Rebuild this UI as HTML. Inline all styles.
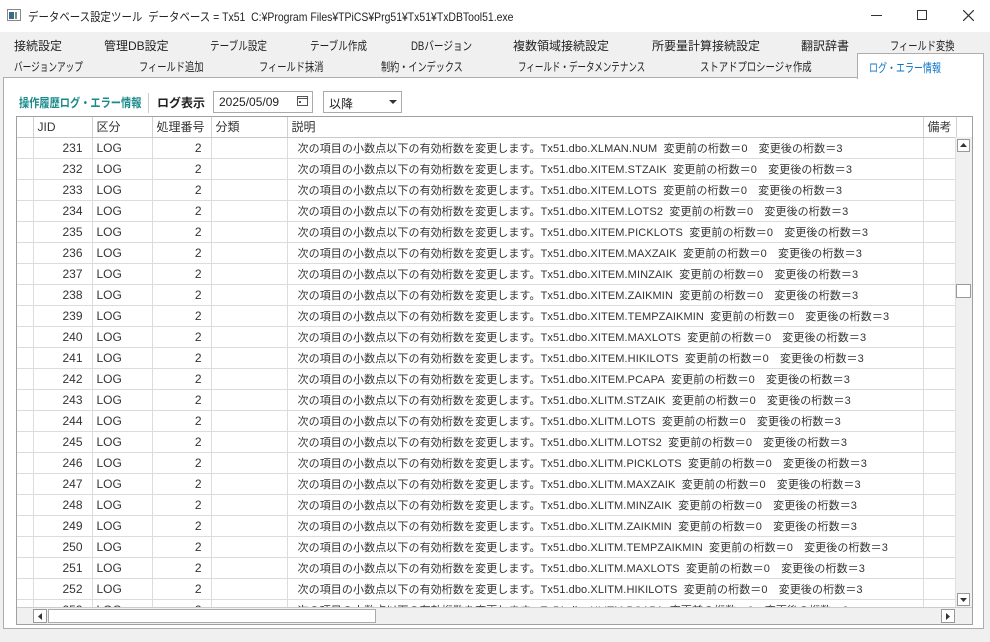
<!DOCTYPE html>
<html><head><meta charset="utf-8"><style>
*{margin:0;padding:0;box-sizing:border-box}
body{width:990px;height:642px;background:#f0f0f0;font-family:"Liberation Sans","Noto Sans CJK JP",sans-serif;font-size:12px;color:#222;position:relative;overflow:hidden}
.a{position:absolute;white-space:nowrap}
#title{left:0;top:0;width:990px;height:32px;background:#fff}
.tab{position:absolute;font-size:12px;color:#222;white-space:nowrap;transform-origin:0 0}
#panel{left:3px;top:77px;width:981px;height:552px;background:#fff;border:1px solid #adadad}
#sel{left:857px;top:53px;width:127px;height:26px;background:#fff;border:1px solid #adadad;border-bottom:none}
#grid{left:16px;top:116px;width:957px;height:509px;border:1px solid #a0a0a0;background:#fff;overflow:hidden}
table{border-collapse:collapse;position:absolute;left:0;top:0;table-layout:fixed}
td{height:21px;border-right:1px solid #dcdcdc;border-bottom:1px solid #dcdcdc;font-size:12px;padding:0 4px;white-space:nowrap;overflow:hidden;color:#333}
tr.h td{height:20px;border-bottom:1px solid #c8c8c8;border-right:1px solid #d0d0d0;color:#333}
td.r{text-align:right;padding-right:9px}
td.d{font-size:11px;padding-left:10px;letter-spacing:0.1px}
</style></head><body>
<div id="title" class="a">
 <svg class="a" style="left:7px;top:9px" width="14" height="12"><rect x="0.5" y="0.5" width="13" height="11" fill="#fff" stroke="#888"/><rect x="2" y="3" width="5" height="7" fill="#3a6a8a"/><rect x="8" y="3" width="2" height="7" fill="#6a9a6a"/></svg>
 <div class="a" style="left:28px;top:8px;font-size:12px;color:#222;transform:scaleX(0.87);transform-origin:0 0">データベース設定ツール&nbsp; データベース = Tx51&nbsp; C:¥Program Files¥TPiCS¥Prg51¥Tx51¥TxDBTool51.exe</div>
 <div class="a" style="left:871px;top:15px;width:11px;height:1px;background:#333"></div>
 <div class="a" style="left:917px;top:10px;width:10px;height:10px;border:1px solid #333"></div>
 <svg class="a" style="left:963px;top:10px" width="11" height="11"><path d="M0 0L11 11M11 0L0 11" stroke="#333" stroke-width="1.2"/></svg>
</div>
<div class="tab" style="left:14px;top:37px">接続設定</div>
<div class="tab" style="left:104px;top:37px">管理DB設定</div>
<div class="tab" style="left:210px;top:37px;transform:scaleX(.8)">テーブル設定</div>
<div class="tab" style="left:310px;top:37px;transform:scaleX(.8)">テーブル作成</div>
<div class="tab" style="left:411px;top:37px;transform:scaleX(.8)">DBバージョン</div>
<div class="tab" style="left:513px;top:37px">複数領域接続設定</div>
<div class="tab" style="left:652px;top:37px">所要量計算接続設定</div>
<div class="tab" style="left:801px;top:37px">翻訳辞書</div>
<div class="tab" style="left:890px;top:37px;transform:scaleX(.77)">フィールド変換</div>
<div class="tab" style="left:14px;top:58px;transform:scaleX(.72)">バージョンアップ</div>
<div class="tab" style="left:139px;top:58px;transform:scaleX(.77)">フィールド追加</div>
<div class="tab" style="left:259px;top:58px;transform:scaleX(.77)">フィールド抹消</div>
<div class="tab" style="left:381px;top:58px;transform:scaleX(.76)">制約・インデックス</div>
<div class="tab" style="left:518px;top:58px;transform:scaleX(.71)">フィールド・データメンテナンス</div>
<div class="tab" style="left:700px;top:58px;transform:scaleX(.78)">ストアドプロシージャ作成</div>
<div id="panel" class="a"></div>
<div id="sel" class="a"></div>
<div class="tab" style="left:869px;top:59px;color:#0a74c8;transform:scaleX(.75)">ログ・エラー情報</div>
<div class="tab" style="left:19px;top:94px;font-weight:bold;color:#1a8a8a;transform:scaleX(.85)">操作履歴ログ・エラー情報</div>
<div class="a" style="left:148px;top:93px;width:1px;height:20px;background:#ccc"></div>
<div class="a" style="left:157px;top:94px;font-weight:bold;font-size:12px">ログ表示</div>
<div class="a" style="left:213px;top:91px;width:100px;height:22px;border:1px solid #aaa;background:#fff;padding:3px 0 0 5px">2025/05/09</div>
<svg class="a" style="left:297px;top:95px" width="12" height="12"><rect x="0.5" y="1.5" width="10" height="9" fill="none" stroke="#555"/><line x1="0.5" y1="3.5" x2="10.5" y2="3.5" stroke="#555"/><rect x="2" y="6" width="2" height="2" fill="#555"/></svg>
<div class="a" style="left:323px;top:91px;width:79px;height:22px;border:1px solid #aaa;background:#fff;padding:3px 0 0 5px">以降</div>
<svg class="a" style="left:389px;top:100px" width="8" height="5"><path d="M0 0H8L4 4Z" fill="#333"/></svg>
<div id="grid" class="a">
<table>
<colgroup><col style="width:16px"><col style="width:59px"><col style="width:60px"><col style="width:59px"><col style="width:76px"><col style="width:636px"><col style="width:33px"></colgroup>
<tr class="h"><td></td><td>JID</td><td>区分</td><td>処理番号</td><td>分類</td><td>説明</td><td>備考</td></tr>
<tr><td></td><td class="r">231</td><td>LOG</td><td class="r">2</td><td></td><td class="d">次の項目の小数点以下の有効桁数を変更します。Tx51.dbo.XLMAN.NUM&nbsp; 変更前の桁数＝0　変更後の桁数＝3</td><td></td></tr>
<tr><td></td><td class="r">232</td><td>LOG</td><td class="r">2</td><td></td><td class="d">次の項目の小数点以下の有効桁数を変更します。Tx51.dbo.XITEM.STZAIK&nbsp; 変更前の桁数＝0　変更後の桁数＝3</td><td></td></tr>
<tr><td></td><td class="r">233</td><td>LOG</td><td class="r">2</td><td></td><td class="d">次の項目の小数点以下の有効桁数を変更します。Tx51.dbo.XITEM.LOTS&nbsp; 変更前の桁数＝0　変更後の桁数＝3</td><td></td></tr>
<tr><td></td><td class="r">234</td><td>LOG</td><td class="r">2</td><td></td><td class="d">次の項目の小数点以下の有効桁数を変更します。Tx51.dbo.XITEM.LOTS2&nbsp; 変更前の桁数＝0　変更後の桁数＝3</td><td></td></tr>
<tr><td></td><td class="r">235</td><td>LOG</td><td class="r">2</td><td></td><td class="d">次の項目の小数点以下の有効桁数を変更します。Tx51.dbo.XITEM.PICKLOTS&nbsp; 変更前の桁数＝0　変更後の桁数＝3</td><td></td></tr>
<tr><td></td><td class="r">236</td><td>LOG</td><td class="r">2</td><td></td><td class="d">次の項目の小数点以下の有効桁数を変更します。Tx51.dbo.XITEM.MAXZAIK&nbsp; 変更前の桁数＝0　変更後の桁数＝3</td><td></td></tr>
<tr><td></td><td class="r">237</td><td>LOG</td><td class="r">2</td><td></td><td class="d">次の項目の小数点以下の有効桁数を変更します。Tx51.dbo.XITEM.MINZAIK&nbsp; 変更前の桁数＝0　変更後の桁数＝3</td><td></td></tr>
<tr><td></td><td class="r">238</td><td>LOG</td><td class="r">2</td><td></td><td class="d">次の項目の小数点以下の有効桁数を変更します。Tx51.dbo.XITEM.ZAIKMIN&nbsp; 変更前の桁数＝0　変更後の桁数＝3</td><td></td></tr>
<tr><td></td><td class="r">239</td><td>LOG</td><td class="r">2</td><td></td><td class="d">次の項目の小数点以下の有効桁数を変更します。Tx51.dbo.XITEM.TEMPZAIKMIN&nbsp; 変更前の桁数＝0　変更後の桁数＝3</td><td></td></tr>
<tr><td></td><td class="r">240</td><td>LOG</td><td class="r">2</td><td></td><td class="d">次の項目の小数点以下の有効桁数を変更します。Tx51.dbo.XITEM.MAXLOTS&nbsp; 変更前の桁数＝0　変更後の桁数＝3</td><td></td></tr>
<tr><td></td><td class="r">241</td><td>LOG</td><td class="r">2</td><td></td><td class="d">次の項目の小数点以下の有効桁数を変更します。Tx51.dbo.XITEM.HIKILOTS&nbsp; 変更前の桁数＝0　変更後の桁数＝3</td><td></td></tr>
<tr><td></td><td class="r">242</td><td>LOG</td><td class="r">2</td><td></td><td class="d">次の項目の小数点以下の有効桁数を変更します。Tx51.dbo.XITEM.PCAPA&nbsp; 変更前の桁数＝0　変更後の桁数＝3</td><td></td></tr>
<tr><td></td><td class="r">243</td><td>LOG</td><td class="r">2</td><td></td><td class="d">次の項目の小数点以下の有効桁数を変更します。Tx51.dbo.XLITM.STZAIK&nbsp; 変更前の桁数＝0　変更後の桁数＝3</td><td></td></tr>
<tr><td></td><td class="r">244</td><td>LOG</td><td class="r">2</td><td></td><td class="d">次の項目の小数点以下の有効桁数を変更します。Tx51.dbo.XLITM.LOTS&nbsp; 変更前の桁数＝0　変更後の桁数＝3</td><td></td></tr>
<tr><td></td><td class="r">245</td><td>LOG</td><td class="r">2</td><td></td><td class="d">次の項目の小数点以下の有効桁数を変更します。Tx51.dbo.XLITM.LOTS2&nbsp; 変更前の桁数＝0　変更後の桁数＝3</td><td></td></tr>
<tr><td></td><td class="r">246</td><td>LOG</td><td class="r">2</td><td></td><td class="d">次の項目の小数点以下の有効桁数を変更します。Tx51.dbo.XLITM.PICKLOTS&nbsp; 変更前の桁数＝0　変更後の桁数＝3</td><td></td></tr>
<tr><td></td><td class="r">247</td><td>LOG</td><td class="r">2</td><td></td><td class="d">次の項目の小数点以下の有効桁数を変更します。Tx51.dbo.XLITM.MAXZAIK&nbsp; 変更前の桁数＝0　変更後の桁数＝3</td><td></td></tr>
<tr><td></td><td class="r">248</td><td>LOG</td><td class="r">2</td><td></td><td class="d">次の項目の小数点以下の有効桁数を変更します。Tx51.dbo.XLITM.MINZAIK&nbsp; 変更前の桁数＝0　変更後の桁数＝3</td><td></td></tr>
<tr><td></td><td class="r">249</td><td>LOG</td><td class="r">2</td><td></td><td class="d">次の項目の小数点以下の有効桁数を変更します。Tx51.dbo.XLITM.ZAIKMIN&nbsp; 変更前の桁数＝0　変更後の桁数＝3</td><td></td></tr>
<tr><td></td><td class="r">250</td><td>LOG</td><td class="r">2</td><td></td><td class="d">次の項目の小数点以下の有効桁数を変更します。Tx51.dbo.XLITM.TEMPZAIKMIN&nbsp; 変更前の桁数＝0　変更後の桁数＝3</td><td></td></tr>
<tr><td></td><td class="r">251</td><td>LOG</td><td class="r">2</td><td></td><td class="d">次の項目の小数点以下の有効桁数を変更します。Tx51.dbo.XLITM.MAXLOTS&nbsp; 変更前の桁数＝0　変更後の桁数＝3</td><td></td></tr>
<tr><td></td><td class="r">252</td><td>LOG</td><td class="r">2</td><td></td><td class="d">次の項目の小数点以下の有効桁数を変更します。Tx51.dbo.XLITM.HIKILOTS&nbsp; 変更前の桁数＝0　変更後の桁数＝3</td><td></td></tr>
<tr><td></td><td class="r">253</td><td>LOG</td><td class="r">2</td><td></td><td class="d">次の項目の小数点以下の有効桁数を変更します。Tx51.dbo.XLITM.PCAPA&nbsp; 変更前の桁数＝0　変更後の桁数＝3</td><td></td></tr>
</table>
<div class="a" style="left:938px;top:20px;width:17px;height:470px;background:#f0f0f0;border-left:1px solid #e0e0e0"></div>
<div class="a" style="left:940px;top:22px;width:13px;height:13px;border:1px solid #999;background:#fff"></div>
<svg class="a" style="left:943px;top:26px" width="7" height="4"><path d="M0 4H7L3.5 0Z" fill="#333"/></svg>
<div class="a" style="left:939px;top:167px;width:15px;height:14px;border:1px solid #999;background:#fff"></div>
<div class="a" style="left:940px;top:476px;width:13px;height:13px;border:1px solid #999;background:#fff"></div>
<svg class="a" style="left:943px;top:481px" width="7" height="4"><path d="M0 0H7L3.5 4Z" fill="#333"/></svg>
<div class="a" style="left:0;top:490px;width:957px;height:19px;background:#f0f0f0;border-top:1px solid #ccc"></div>
<div class="a" style="left:16px;top:492px;width:14px;height:14px;border:1px solid #999;background:#fff"></div>
<svg class="a" style="left:21px;top:496px" width="4" height="7"><path d="M4 0V7L0 3.5Z" fill="#333"/></svg>
<div class="a" style="left:31px;top:492px;width:328px;height:14px;border:1px solid #aaa;background:#fff"></div>
<div class="a" style="left:924px;top:492px;width:14px;height:14px;border:1px solid #999;background:#fff"></div>
<svg class="a" style="left:929px;top:496px" width="4" height="7"><path d="M0 0V7L4 3.5Z" fill="#333"/></svg>
</div>
</body></html>
